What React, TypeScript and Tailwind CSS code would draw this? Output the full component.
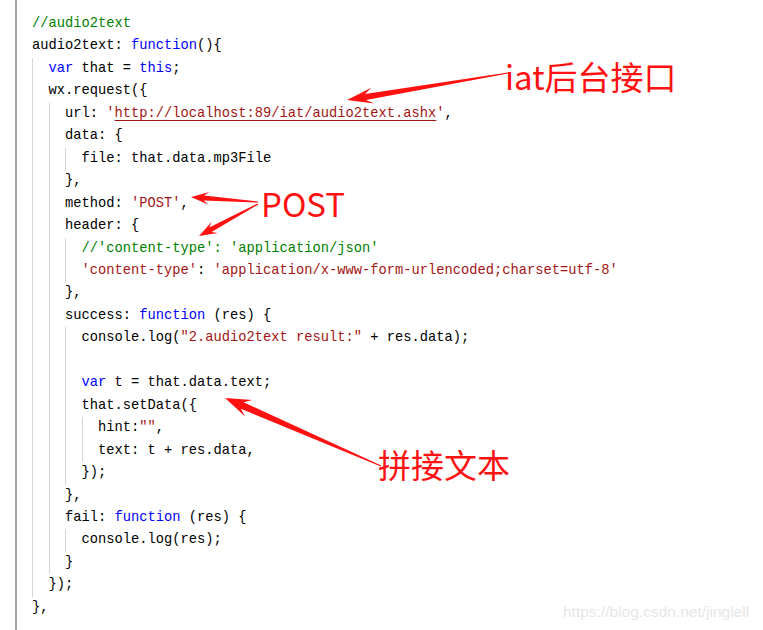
import React from "react";

type Tok = [string, string];
type Line = [number, Tok[]];

const lines: Line[] = [
  [0, [["c", "//audio2text"]]],
  [0, [["p", "audio2text: "], ["k", "function"], ["p", "(){"]]],
  [1, [["k", "var"], ["p", " that = "], ["k", "this"], ["p", ";"]]],
  [1, [["p", "wx.request({"]]],
  [2, [["p", "url: "], ["s", "'"], ["u", "http://localhost:89/iat/audio2text.ashx"], ["s", "'"], ["p", ","]]],
  [2, [["p", "data: {"]]],
  [3, [["p", "file: that.data.mp3File"]]],
  [2, [["p", "},"]]],
  [2, [["p", "method: "], ["s", "'POST'"], ["p", ","]]],
  [2, [["p", "header: {"]]],
  [3, [["c", "//'content-type': 'application/json'"]]],
  [3, [["s", "'content-type'"], ["p", ": "], ["s", "'application/x-www-form-urlencoded;charset=utf-8'"]]],
  [2, [["p", "},"]]],
  [2, [["p", "success: "], ["k", "function"], ["p", " (res) {"]]],
  [3, [["p", "console.log("], ["s", "\"2.audio2text result:\""], ["p", " + res.data);"]]],
  [3, []],
  [3, [["k", "var"], ["p", " t = that.data.text;"]]],
  [3, [["p", "that.setData({"]]],
  [4, [["p", "hint:"], ["s", "\"\""], ["p", ","]]],
  [4, [["p", "text: t + res.data,"]]],
  [3, [["p", "});"]]],
  [2, [["p", "},"]]],
  [2, [["p", "fail: "], ["k", "function"], ["p", " (res) {"]]],
  [3, [["p", "console.log(res);"]]],
  [2, [["p", "}"]]],
  [1, [["p", "});"]]],
  [0, [["p", "},"]]],
];

const tokClass: Record<string, string> = {
  p: "text-[#000000]",
  k: "text-[#0000ff]",
  s: "text-[#a31515]",
  c: "text-[#008000]",
  u: "text-[#a31515] underline decoration-[#a31515] underline-offset-[3px]",
};

// tapered snipping-tool style arrow
const arrow = (tx: number, ty: number, px: number, py: number, hl: number, hw: number, nw: number) => {
  const dx = px - tx;
  const dy = py - ty;
  const L = Math.hypot(dx, dy);
  const ux = dx / L;
  const uy = dy / L;
  const nx = -uy;
  const ny = ux;
  const at = (d: number, w: number) => `${(tx + ux * d + nx * w).toFixed(1)},${(ty + uy * d + ny * w).toFixed(1)}`;
  const neck = L - hl * 0.72;
  const barb = L - hl;
  return [at(0, 0.6), at(neck, nw / 2), at(barb, hw / 2), at(L, 0), at(barb, -hw / 2), at(neck, -nw / 2), at(0, -0.6)].join(" ");
};

const CodeLine = ({ indent, toks }: { indent: number; toks: Tok[] }) => (
  <div className="flex h-[22.46px] leading-[22.46px] whitespace-pre">
    {Array.from({ length: indent }).map((_, i) => (
      <span key={i} className="w-[16.5px] shrink-0 border-l border-[#d6d6d6]" />
    ))}
    <span>
      {toks.map(([t, s], i) => (
        <span key={i} className={tokClass[t]}>
          {s}
        </span>
      ))}
    </span>
  </div>
);

export default function App() {
  return (
    <div className="relative w-[763px] h-[630px] overflow-hidden bg-white pl-[15px]">
      <div className="h-full border-l-2 border-[#a3a3a3] pl-[15px] pt-[13px] font-['Liberation_Mono',monospace] text-[13.75px]">
        {lines.map(([indent, toks], i) => (
          <CodeLine key={i} indent={indent} toks={toks} />
        ))}
      </div>

      <svg className="absolute left-0 top-0 pointer-events-none" width="763" height="630">
        <polygon points={arrow(508, 73, 347, 100, 26, 16, 6)} fill="#ff1111" />
        <polygon points={arrow(258, 202, 191, 197, 18, 13, 5)} fill="#ff1111" />
        <polygon points={arrow(258, 204, 199, 236, 18, 13, 5)} fill="#ff1111" />
        <polygon points={arrow(381, 466, 225, 398, 26, 18, 7)} fill="#ff1111" />
      </svg>

      <div className="absolute left-[505px] top-[60px] font-['Noto_Sans_CJK_SC',sans-serif] text-[33px] leading-[33px] text-[#ff1111] whitespace-nowrap">
        iat后台接口
      </div>
      <div className="absolute left-[261px] top-[187px] font-['Noto_Sans_CJK_SC',sans-serif] text-[33px] leading-[33px] text-[#ff1111] whitespace-nowrap">
        POST
      </div>
      <div className="absolute left-[378px] top-[448px] font-['Noto_Sans_CJK_SC',sans-serif] text-[33px] leading-[33px] text-[#ff1111] whitespace-nowrap">
        拼接文本
      </div>

      <div className="absolute left-[563px] top-[604px] font-['Liberation_Sans',Arial,sans-serif] text-[15.5px] leading-[15.5px] text-[#e6e6e6] whitespace-nowrap">
        https://blog.csdn.net/jinglell
      </div>
    </div>
  );
}
